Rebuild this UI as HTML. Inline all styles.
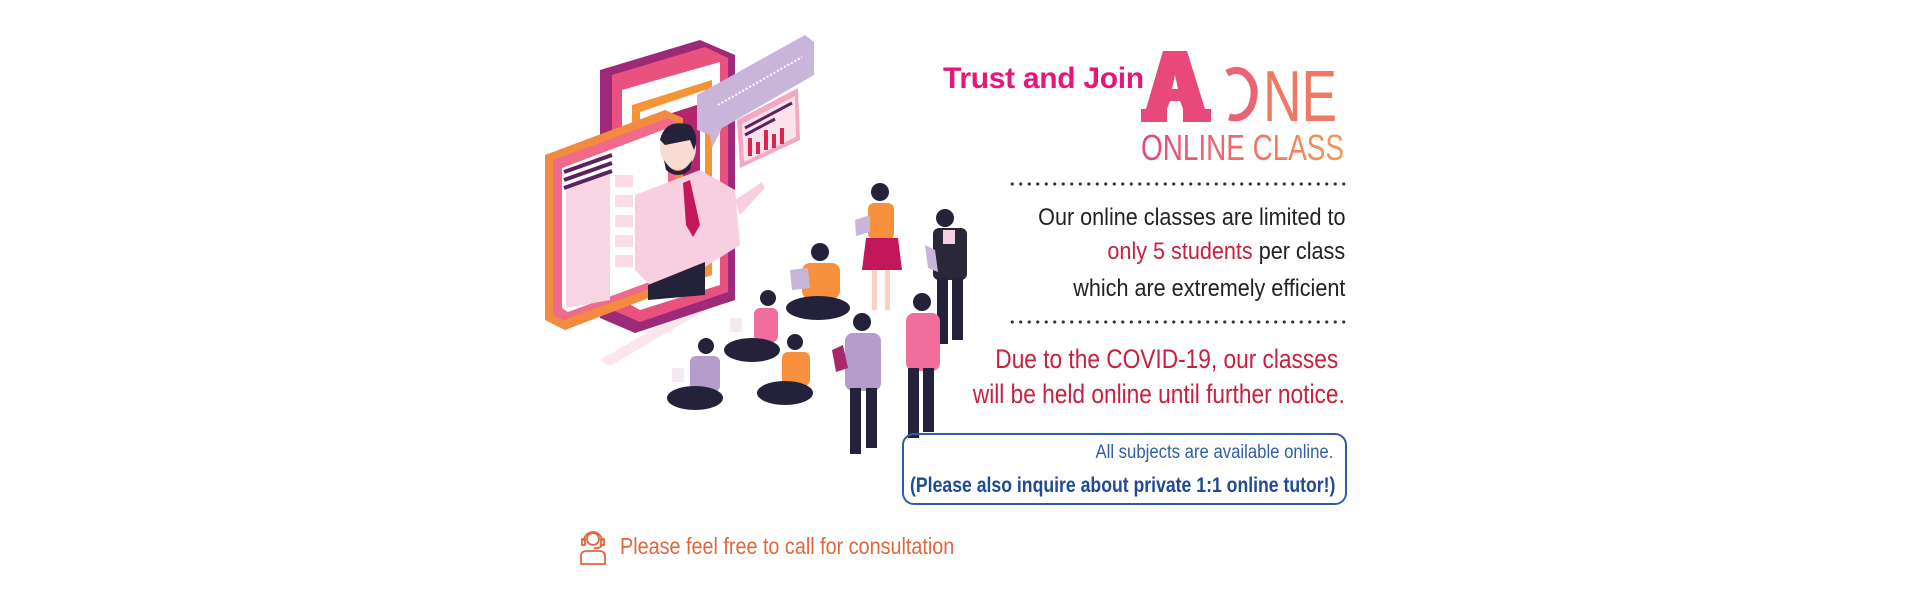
<!DOCTYPE html>
<html><head><meta charset="utf-8"><style>
html,body{margin:0;padding:0;background:#fff;width:1920px;height:600px;overflow:hidden;position:relative;font-family:"Liberation Sans",sans-serif}
.a{position:absolute;white-space:nowrap}
.r{right:575px;transform-origin:right center}
.body{font-size:24px;color:#222;transform:scaleX(.9)}
.due{font-size:27px;color:#c8203e;transform:scaleX(.84)}
.dots{position:absolute;left:1008px;width:338px;height:4px;background:radial-gradient(circle,#333 1.4px,transparent 1.8px) 0 0/8.5px 4px repeat-x}
</style></head><body>

<svg class="a" style="left:0;top:0" width="1000" height="600" viewBox="0 0 1000 600">
<polygon points="600,360 720,290 730,296 610,366" fill="#fbe6ee"/>
<polygon points="600,70 700,40 735,55 735,300 635,333 600,318" fill="#9c2a78"/>
<polygon points="612,75 705,47 728,58 728,292 640,322 612,310" fill="#e9527e"/>
<polygon points="622,90 720,62 720,285 640,310 622,300" fill="#fff"/>
<polygon points="632,105 712,80 712,275 645,298 632,290" fill="#f59436"/>
<polygon points="640,112 705,90 705,268 648,288 640,282" fill="#fff"/>
<polygon points="650,120 700,104 700,200 650,215" fill="#b7246e"/>
<polygon points="545,155 665,110 683,118 683,285 565,330 545,320" fill="#f28a3f"/>
<polygon points="553,160 668,118 675,122 675,280 563,320 553,315" fill="#f06a8a"/>
<polygon points="562,168 668,128 668,275 568,312 562,308" fill="#fff"/>
<polygon points="566,190 610,174 610,300 566,308" fill="#f8d5e2"/>
<g stroke="#5e2160" stroke-width="4"><line x1="564" y1="172" x2="612" y2="155"/><line x1="564" y1="180" x2="612" y2="163"/><line x1="564" y1="188" x2="612" y2="171"/></g>
<g fill="#fbdbe6"><rect x="615" y="175" width="18" height="12"/><rect x="615" y="195" width="18" height="12"/><rect x="615" y="215" width="18" height="12"/><rect x="615" y="235" width="18" height="12"/><rect x="615" y="255" width="18" height="12"/></g>
<polygon points="697,95 805,35 814,42 814,75 710,135 697,130" fill="#c9b4da"/>
<polygon points="710,135 712,148 722,128" fill="#c9b4da"/>
<line x1="718" y1="105" x2="802" y2="57" stroke="#fff" stroke-width="2" stroke-dasharray="2,2"/>
<polygon points="737,120 798,88 800,140 740,168" fill="#f4a7c0"/>
<polygon points="742,124 795,96 796,137 744,162" fill="#fbe3ec"/>
<g stroke="#5e2160" stroke-width="3"><line x1="745" y1="128" x2="792" y2="103"/><line x1="745" y1="135" x2="775" y2="119"/></g>
<g fill="#d8284f"><rect x="748" y="138" width="4" height="18"/><rect x="756" y="142" width="4" height="12"/><rect x="764" y="130" width="4" height="20"/><rect x="772" y="134" width="4" height="14"/><rect x="780" y="128" width="4" height="16"/></g>
<polygon points="635,195 700,170 735,190 740,245 700,270 650,285 635,270" fill="#f8cfe0"/>
<polygon points="683,183 690,180 700,225 693,237 686,225" fill="#c2185b"/>
<polygon points="648,285 705,262 705,295 648,300" fill="#23223a"/>
<path d="M735,200 Q750,190 762,182 L765,188 L740,215 Z" fill="#f8cfe0"/>
<ellipse cx="678" cy="148" rx="18" ry="22" fill="#f9dcd0"/>
<path d="M660,140 Q665,118 690,125 Q700,135 694,150 L690,140 L665,145 Z" fill="#23223a"/>
<path d="M664,160 Q678,182 692,160 L690,170 Q678,180 666,170 Z" fill="#23223a"/>
<g>
<circle cx="880" cy="192" r="9" fill="#23223a"/>
<rect x="868" y="203" width="26" height="36" rx="6" fill="#f7913d"/>
<polygon points="866,238 898,238 902,270 862,270" fill="#c2185b"/>
<rect x="872" y="270" width="5" height="40" fill="#f8d0c4"/><rect x="885" y="270" width="5" height="40" fill="#f8d0c4"/>
<polygon points="855,220 870,215 870,232 856,236" fill="#c9b4da"/>
<circle cx="945" cy="218" r="9" fill="#23223a"/>
<rect x="933" y="228" width="34" height="52" rx="6" fill="#2a2838"/>
<rect x="943" y="230" width="12" height="14" fill="#f8cfe0"/>
<rect x="937" y="278" width="11" height="66" fill="#23223a"/><rect x="952" y="278" width="11" height="62" fill="#23223a"/>
<polygon points="925,245 935,250 938,272 928,268" fill="#c9b4da"/>
<circle cx="820" cy="252" r="9" fill="#23223a"/>
<rect x="802" y="263" width="38" height="36" rx="8" fill="#f7913d"/>
<ellipse cx="818" cy="308" rx="32" ry="12" fill="#23223a"/>
<polygon points="790,270 808,268 810,288 792,290" fill="#c9b4da"/>
<circle cx="768" cy="298" r="8" fill="#23223a"/>
<rect x="754" y="308" width="24" height="34" rx="6" fill="#f16d9c"/>
<ellipse cx="752" cy="350" rx="28" ry="12" fill="#23223a"/>
<rect x="730" y="318" width="12" height="14" fill="#f3e9f0"/>
<circle cx="706" cy="346" r="8" fill="#23223a"/>
<rect x="690" y="356" width="30" height="36" rx="6" fill="#b49ccc"/>
<ellipse cx="695" cy="398" rx="28" ry="12" fill="#23223a"/>
<rect x="672" y="368" width="12" height="14" fill="#f3e9f0"/>
<circle cx="795" cy="342" r="8" fill="#23223a"/>
<rect x="782" y="352" width="28" height="34" rx="6" fill="#f7913d"/>
<ellipse cx="785" cy="393" rx="28" ry="12" fill="#23223a"/>
<circle cx="862" cy="322" r="9" fill="#23223a"/>
<rect x="845" y="333" width="36" height="58" rx="8" fill="#b49ccc"/>
<rect x="850" y="388" width="11" height="66" fill="#23223a"/><rect x="866" y="388" width="11" height="60" fill="#23223a"/>
<polygon points="832,350 843,345 848,368 836,372" fill="#a62a6a"/>
<circle cx="922" cy="302" r="9" fill="#23223a"/>
<rect x="906" y="313" width="34" height="58" rx="8" fill="#f16d9c"/>
<rect x="908" y="368" width="11" height="70" fill="#23223a"/><rect x="923" y="368" width="11" height="64" fill="#23223a"/>
</g>
</svg>

<div class="a" style="left:943px;top:62px;font-size:30px;font-weight:bold;color:#e5177b;letter-spacing:-0.3px">Trust and Join</div>

<svg class="a" style="left:1135px;top:45px" width="215" height="120" viewBox="0 0 215 120">
<defs><linearGradient id="lg" x1="0" x2="1"><stop offset="0" stop-color="#e8457a"/><stop offset="1" stop-color="#f29a55"/></linearGradient></defs>
<path fill-rule="evenodd" fill="#e8487a" d="M28,6 L52,6 L70,64 L76,64 L76,77 L48,77 L48,64 L45,56 L35,56 L32,64 L32,77 L6,77 L6,64 L11,64 Z M37,44 L43,44 L40,30 Z"/>
<path d="M92,28 Q104,22 112,30 Q124,42 116,62 Q108,76 94,72" fill="none" stroke="#ea6475" stroke-width="7"/>
<text x="0" y="0" font-family="Liberation Sans" font-size="72" fill="#ee7a65" transform="translate(128,76) scale(0.74,1)">NE</text>
<text x="0" y="0" font-family="Liberation Sans" font-size="36" fill="url(#lg)" transform="translate(6,115) scale(0.775,1)">ONLINE CLASS</text>
</svg>

<div class="dots" style="top:182px"></div>
<div class="a r body" style="top:204px">Our online classes are limited to</div>
<div class="a r body" style="top:238px"><span style="color:#c8203e">only 5 students</span> per class</div>
<div class="a r body" style="top:275px">which are extremely efficient</div>
<div class="dots" style="top:320px"></div>

<div class="a r due" style="top:344px;right:582px">Due to the COVID-19, our classes</div>
<div class="a r due" style="top:379px">will be held online until further notice.</div>

<div class="a" style="left:902px;top:433px;width:441px;height:68px;border:2px solid #2f5ea8;border-radius:12px"></div>
<div class="a r" style="top:442px;right:587px;font-size:19px;color:#2f5ea8;transform:scaleX(.88)">All subjects are available online.</div>
<div class="a r" style="top:474px;right:585px;font-size:21px;font-weight:bold;color:#1f4a94;transform:scaleX(.84)">(Please also inquire about private 1:1 online tutor!)</div>

<svg class="a" style="left:578px;top:528px" width="30" height="38" viewBox="0 0 30 38">
<g fill="none" stroke="#e0673c" stroke-width="1.8">
<circle cx="15" cy="11" r="6"/>
<path d="M6,13 A9,9 0 1 1 24,13"/>
<rect x="4" y="11" width="3" height="6"/><rect x="23" y="11" width="3" height="6"/>
<path d="M24,17 Q22,21 16,20"/>
<path d="M3,36 L3,28 Q3,23 9,23 L21,23 Q27,23 27,28 L27,36 Z"/>
</g></svg>
<div class="a" style="left:620px;top:533px;font-size:23px;color:#e0673c;transform:scaleX(.86);transform-origin:left center">Please feel free to call for consultation</div>
</body></html>
